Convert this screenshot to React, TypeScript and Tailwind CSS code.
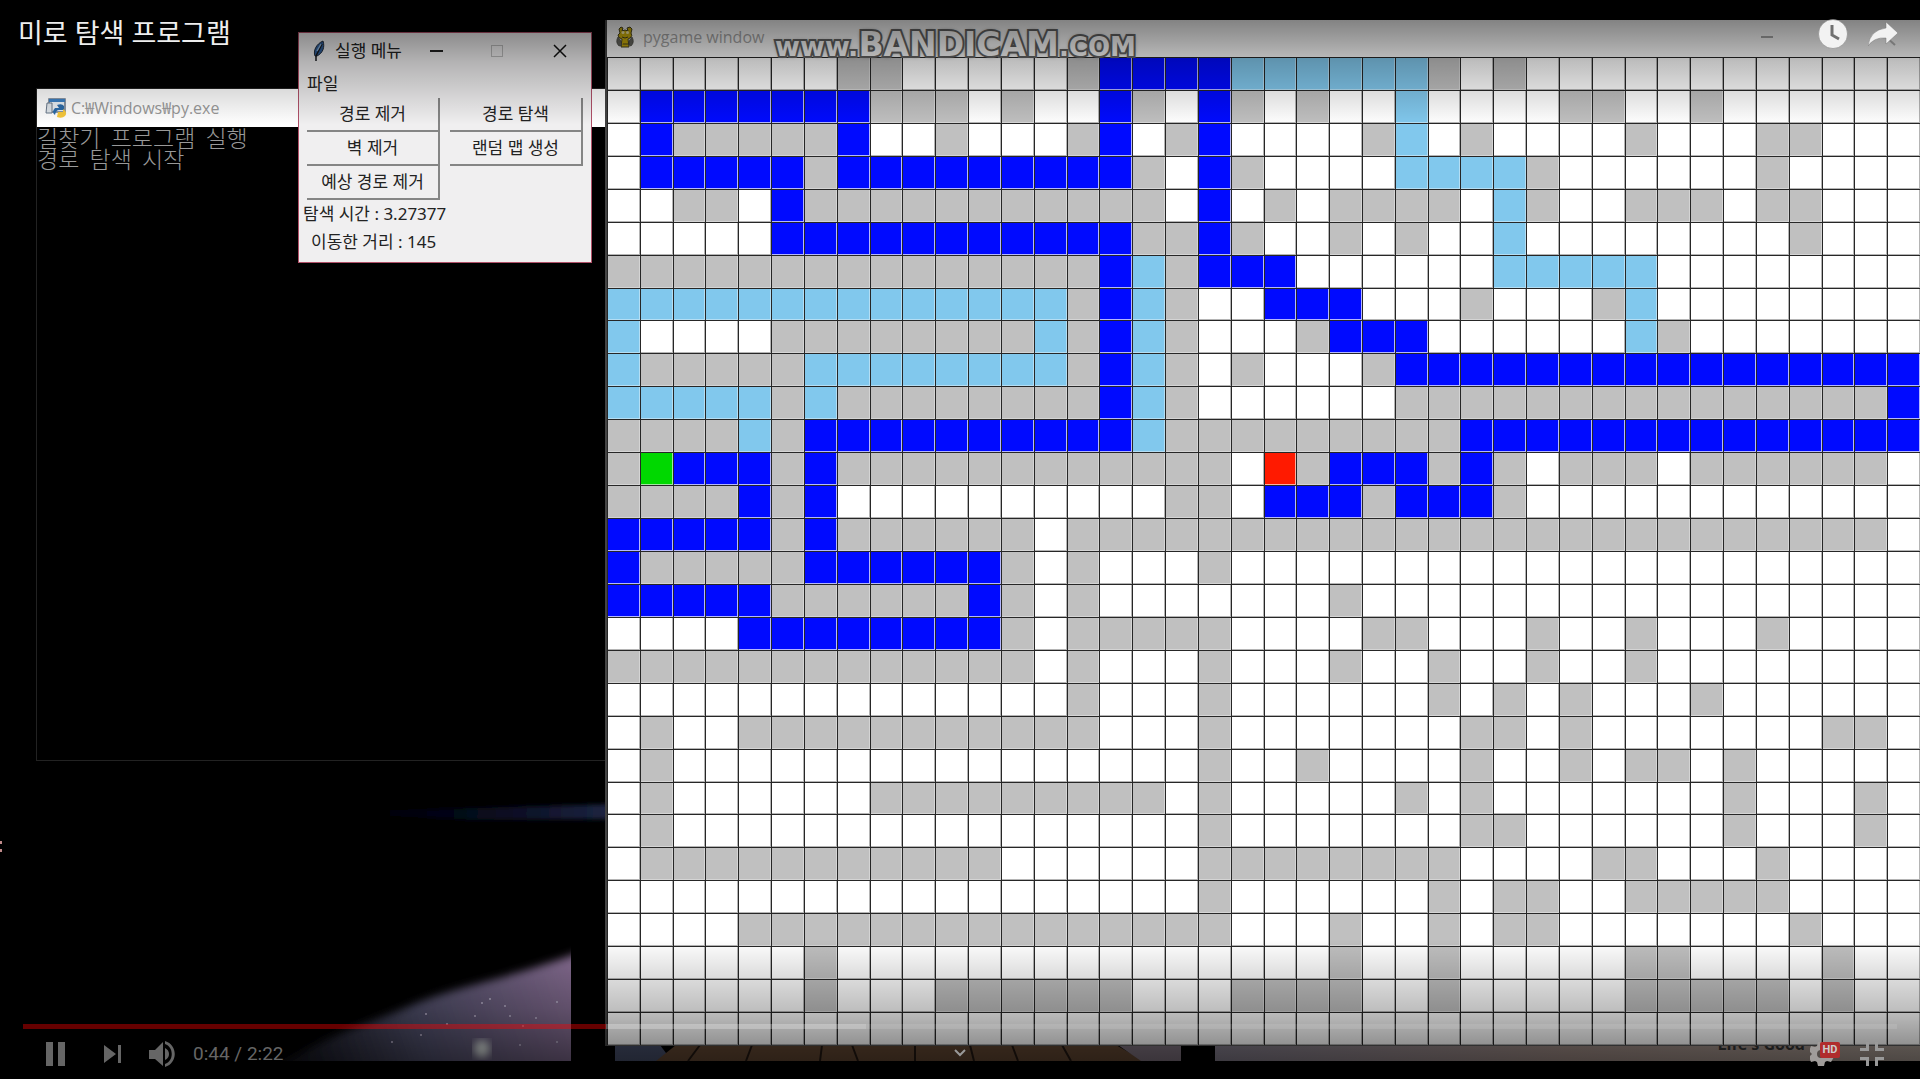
import React from "react";

const MAZE = [
  ".......##.....#bbbbssssss#.#............",
  ".bbbbbbb###.#..b#.b#.#..s....##..#......",
  ".b#####b..#...#b.#b....#s.#....#...##...",
  ".bbbbb#bbbbbbbbb#.b#....ssss#......#....",
  "..##.b###########.b.#.####.s#..###.##...",
  ".....bbbbbbbbbbb##b#..#.#..s........#...",
  "###############bs#bbb......sssss........",
  "ssssssssssssss#bs#..bbb...#...#s........",
  "s....########s#bs#...#bbb......s#.......",
  "s#####ssssssss#bs#.#...#bbbbbbbbbbbbbbbb",
  "sssss#s########bs#......###############b",
  "####s#bbbbbbbbbbs#########bbbbbbbbbbbbbb",
  "#gbbb#b############.r#bbb#b#.###.######.",
  "####b#b..........##.bbb#bbb#............",
  "bbbbb#b######.#########################.",
  "b#####bbbbbb#.#...#.....................",
  "bbbbb######b#.#.......#.................",
  "....bbbbbbbb#.#####....##...#..#...#....",
  "#############.#...#...#..#..#..#........",
  "..............#...#......#.#.#...#......",
  ".#..###########...#.......##.#.......##.",
  ".#................#..#....#..#.##.#.....",
  ".#......#########.#.....#.#.......#...#.",
  ".#................#.......##......#...#.",
  ".###########......########....##...#....",
  "..................#......#.##..#####....",
  "....###############...#..#.##.......#...",
  "......#...............#..#.....##....#..",
  "......#...######...####..#.....#####.#..",
  "........................................",
];

const CELL: Record<string, string> = {
  ".": "bg-white border-r-[#b4b4b4] border-b-[#b4b4b4]",
  "#": "bg-[#c0c0c0] border-r-[#d4d4d4] border-b-[#d4d4d4]",
  b: "bg-[#000aff] border-r-[#b4b7ff] border-b-[#b4b7ff]",
  s: "bg-[#81c8ed] border-r-[#b4def4] border-b-[#b4def4]",
  g: "bg-[#00d800] border-r-[#a0e8a0] border-b-[#a0e8a0]",
  r: "bg-[#ff1a00] border-r-[#ffb0a0] border-b-[#ffb0a0]",
};

function Maze() {
  return (
    <div className="grid flex-1 grid-cols-[repeat(40,minmax(0,1fr))] grid-rows-[repeat(30,minmax(0,1fr))] border-b border-[#555]">
      {MAZE.flatMap((row, y) =>
        row.split("").map((c, x) => (
          <div key={`${x}-${y}`} className="border-t border-l border-[#262626]">
            <div className={`h-full border-r border-b ${CELL[c]}`} />
          </div>
        )),
      )}
    </div>
  );
}

function Feather() {
  return (
    <svg viewBox="0 0 16 22" className="h-[22px] w-4" aria-hidden="true">
      <path d="M4 16C2 11 5 4 12 1c2 6 0 12-6 15z" fill="#2f5f9c" stroke="#222c3a" strokeWidth="1" />
      <path d="M11 4 5 16v5" fill="none" stroke="#15181d" strokeWidth="1.5" />
      <path d="M10 4 6 11" stroke="#8db4dd" strokeWidth="1.5" />
    </svg>
  );
}

function PyIcon() {
  return (
    <svg viewBox="0 0 22 22" className="h-[22px] w-[22px]" aria-hidden="true">
      <path d="M4 2h16v13H4z" fill="#e8eef3" stroke="#69788a" strokeWidth="1.5" />
      <path d="M4 2h16v3H4z" fill="#3d7fc0" />
      <path d="M2 6h5v10H1z" fill="#dfe5ea" stroke="#69788a" />
      <path d="M12 8q5-2 7 1v4h-5q-3 0-4 5-4-3 0-7h4z" fill="#2c6ba8" />
      <path d="M13 15h5v-3q5 3 2 7-3 3-8 1z" fill="#f6c83c" />
    </svg>
  );
}

function PygameIcon() {
  return (
    <svg viewBox="0 0 20 22" className="h-[24px] w-5" aria-hidden="true">
      <path d="M4 3 6 1l2 1-1 3q3-2 6 0l-1-3 3-1 2 2-1 4q2 3-1 5l-2 1 1 8H6l1-8q-4-1-4-4l2-2z" fill="#d3b40c" stroke="#4a4520" strokeWidth="1" />
      <path d="M3 11q-3 5 1 9l3-1-1-4zM17 11q3 5-1 9l-2-1v-4z" fill="#6a6a62" stroke="#44443c" strokeWidth=".7" />
      <circle cx="8" cy="6.5" r="1.5" fill="#fff3b0" />
      <circle cx="12.5" cy="6.5" r="1.5" fill="#fff3b0" />
      <path d="M7 11q3 2 6 0M8 18h5" fill="none" stroke="#4a4520" />
    </svg>
  );
}

function ToolButton({ children }: { children: React.ReactNode }) {
  return (
    <button className="h-[34px] border-r-2 border-b-2 border-r-[#858585] border-b-[#858585] bg-[#f0eff0] leading-5">
      {children}
    </button>
  );
}

function Wallpaper() {
  return (
    <svg className="absolute inset-0 h-full w-full" viewBox="0 0 1920 1079" preserveAspectRatio="none" aria-hidden="true">
      <defs>
        <linearGradient id="streak" gradientUnits="userSpaceOnUse" x1="390" y1="0" x2="606" y2="0">
          <stop offset="0" stopColor="#00000a" />
          <stop offset="0.5" stopColor="#080b20" />
          <stop offset="1" stopColor="#1c2440" />
        </linearGradient>
        <linearGradient id="sky" gradientUnits="userSpaceOnUse" x1="300" y1="1060" x2="590" y2="960">
          <stop offset="0" stopColor="#15161f" />
          <stop offset="0.4" stopColor="#4c4c66" />
          <stop offset="1" stopColor="#8c7096" />
        </linearGradient>
        <linearGradient id="shore" x1="0" x2="1">
          <stop offset="0" stopColor="#7c7684" />
          <stop offset="0.5" stopColor="#96847e" />
          <stop offset="1" stopColor="#a0948c" />
        </linearGradient>
        <filter id="soft"><feGaussianBlur stdDeviation="4" /></filter>
        <filter id="streakSoft" x="-5%" y="-50%" width="110%" height="200%"><feGaussianBlur stdDeviation="2" /></filter>
        <clipPath id="scene"><path d="M0 0h571v1061H0z" /></clipPath>
      </defs>
      <path d="M0 841h2v3H0zM0 849h2v3H0z" fill="#c08a8a" />
      <path d="M390 810 540 806l80-2v15l-150 1-80-4z" fill="url(#streak)" filter="url(#streakSoft)" />
      <g clipPath="url(#scene)">
        <path d="M220 1110C300 1040 360 1028 410 1006S500 983 600 945v165H220z" fill="url(#sky)" filter="url(#soft)" />
        <ellipse cx="482" cy="1049" rx="8" ry="9" fill="#d4dcd8" filter="url(#soft)" />
        <g fill="#b4acc4">
          {[[426, 1014], [482, 1003], [490, 999], [505, 1006], [510, 1016], [475, 1016], [523, 1026], [557, 1002], [421, 1035], [392, 1042], [536, 1018], [557, 1042], [447, 1024], [520, 1045]].map(([x, y]) => (
            <circle key={`${x}-${y}`} cx={x} cy={y} r="1" />
          ))}
        </g>
      </g>
      <path d="M615 1045h45l12 16h-57z" fill="#444c66" />
      <path d="M676 1045h440l28 16H656z" fill="#5e4430" />
      <path d="M700 1045l-12 16M752 1045l-6 16M822 1045l-2 16M852 1045l6 16M915 1045v16M970 1045l4 16M1012 1045l6 16M1062 1045l9 16" stroke="#201610" strokeWidth="2" />
      <path d="M1118 1045h63v16h-40z" fill="#786c78" />
      <path d="M1215 1045h705v16h-705z" fill="url(#shore)" />
    </svg>
  );
}

function PlayerBar() {
  return (
    <footer className="absolute inset-x-0 bottom-0 px-[23px] text-[#666]">
      <div className="flex h-[5px]" role="progressbar" aria-label="재생 위치" aria-valuenow={31}>
        <div className="w-[31.1%] bg-[#f00]/40" />
        <div className="w-[13.9%] bg-white/25" />
        <div className="flex-1 bg-white/10" />
      </div>
      <div className="relative flex h-[50px] items-center">
        <button aria-label="일시중지" className="ml-[23px] h-6 w-[19px]">
          <svg viewBox="0 0 19 24" fill="currentColor" aria-hidden="true"><path d="M0 0h7v24H0zM12 0h7v24h-7z" /></svg>
        </button>
        <button aria-label="다음" className="ml-[39px] h-[18px] w-[17px]">
          <svg viewBox="0 0 17 18" fill="currentColor" aria-hidden="true"><path d="M0 0 12 9 0 18zM14 0h3v18h-3z" /></svg>
        </button>
        <button aria-label="음소거" className="ml-[28px] h-[26px] w-[26px]">
          <svg viewBox="0 0 26 26" fill="currentColor" aria-hidden="true">
            <path d="M0 9v9h6l8 7V1L6 9zM16 7v12q4-2 4-6t-4-6zM16 0v3c9 3 9 17 0 20v3c13-4 13-22 0-26z" />
          </svg>
        </button>
        <span className="ml-[18px] font-[Roboto,sans-serif] text-[19px] leading-6">0:44 / 2:22</span>
        <button aria-label="더보기" className="absolute top-5 left-1/2 h-2 w-3 -translate-x-1/2 text-[#999]">
          <svg viewBox="0 0 12 8" fill="none" stroke="currentColor" strokeWidth="2" className="block" aria-hidden="true"><path d="m1 1 5 5 5-5" /></svg>
        </button>
        <button aria-label="설정" className="relative ml-auto h-6 w-[30px] text-[#a09c9a]">
          <svg viewBox="0 0 24 24" className="block h-6 w-6" fill="currentColor" aria-hidden="true">
            <path fillRule="evenodd" d="m8 0h6l1 4 2 1 4-1 3 5-3 3 3 3-3 5-4-1-2 1-1 4H8l-1-4-2-1-4 1-2-5 3-3-3-3 2-5 4 1 2-1zM11 8a4 4 0 1 0 0 8 4 4 0 0 0 0-8z" />
          </svg>
          <span className="absolute top-0 right-0 flex h-4 w-5 items-center justify-center rounded-xs bg-[#b02c2c] font-[Roboto,sans-serif] text-[11px] leading-4 font-bold text-[#ccc]">HD</span>
        </button>
        <button aria-label="전체화면 종료" className="mr-[13px] ml-5 h-6 w-6 text-[#999]">
          <svg viewBox="0 0 24 24" fill="none" stroke="currentColor" strokeWidth="3" aria-hidden="true">
            <path d="M0 7.5h7.500V0M16.500 0v7.500H24M0 16.500h7.500V24M24 16.500h-7.500V24" />
          </svg>
        </button>
      </div>
    </footer>
  );
}

export default function App() {
  return (
    <main className="relative h-screen w-full overflow-hidden bg-black font-['Noto_Sans','Noto_Sans_CJK_KR',sans-serif]">
      <Wallpaper />
      <span className="absolute right-[115px] bottom-[25px] font-['Open_Sans',sans-serif] text-base leading-5 font-bold text-[#333]">Life's Good</span>

      <section className="absolute top-[88px] left-9 flex h-[673px] w-[571px] flex-col border border-[#222]">
        <header className="flex h-[38px] items-center gap-1 bg-white pl-2 text-base text-[#999]">
          <PyIcon />
          <span className="font-['Open_Sans','Noto_Sans_CJK_KR',sans-serif]">C:₩Windows₩py.exe</span>
        </header>
        <pre className="font-['Noto_Sans_CJK_KR',monospace] text-[23px] leading-[21px] font-light text-[#999]">{"길찾기  프로그램  실행\n경로  탐색  시작"}</pre>
      </section>

      <section className="absolute top-5 right-0 bottom-[33px] left-[605px] flex flex-col border-l-2 border-[#444]">
        <header className="flex h-[37px] items-center bg-white pb-1 pl-2 text-base text-[#aaa]">
          <PygameIcon />
          <span className="ml-2 font-['Open_Sans',sans-serif]">pygame window</span>
          <span className="mr-[147px] ml-auto h-0.5 w-3 bg-[#aaa]" />
        </header>
        <Maze />
      </section>

      <p className="absolute top-[25px] left-[775px] flex items-baseline font-['DejaVu_Sans',sans-serif] leading-10 font-bold text-white [-webkit-text-stroke:4px_#6a6a6a] [paint-order:stroke_fill] [text-shadow:0_0_4px_#555]">
        <span className="text-[27px]">www.</span>
        <span className="text-[33px]">BANDICAM</span>
        <span className="text-[26px]">.COM</span>
      </p>

      <section className="absolute top-8 left-[298px] flex h-[231px] w-[294px] flex-col border border-[#b05068] bg-[#f0eff0] text-[17px] text-[#222]">
        <header className="flex h-9 items-center pl-3">
          <Feather />
          <span className="ml-2">실행 메뉴</span>
          <button aria-label="최소화" className="ml-7 h-4 w-[13px]"><span className="block h-0.5 bg-[#222]" /></button>
          <button aria-label="최대화" className="ml-12 size-3 border border-[#bbb]" />
          <button aria-label="닫기" className="ml-[50px] size-[14px]">
            <svg viewBox="0 0 14 14" aria-hidden="true"><path d="m1 1 12 12M13 1 1 13" stroke="#111" strokeWidth="1.5" /></svg>
          </button>
        </header>
        <nav className="h-[29px] pt-px pl-2"><button className="leading-7">파일</button></nav>
        <div className="grid grid-cols-[133px_133px] gap-x-[10px] pl-2">
          <ToolButton>경로 제거</ToolButton>
          <ToolButton>경로 탐색</ToolButton>
          <ToolButton>벽 제거</ToolButton>
          <ToolButton>랜덤 맵 생성</ToolButton>
          <ToolButton>예상 경로 제거</ToolButton>
        </div>
        <p className="pl-1 leading-7">탐색 시간 : 3.27377</p>
        <p className="pl-3 leading-7">이동한 거리 : 145</p>
      </section>

      <div className="pointer-events-none absolute inset-x-0 top-0 h-[125px] bg-linear-to-b from-black/60 via-black/25 to-transparent" />
      <div className="pointer-events-none absolute inset-x-0 bottom-0 h-[140px] bg-linear-to-t from-black/60 via-black/25 to-transparent" />

      <h1 className="absolute top-[17px] left-[18px] text-[27px] leading-8 text-[#eee]">미로 탐색 프로그램</h1>
      <div className="absolute top-[19px] right-[22px] flex items-center gap-5 text-[#f2f2f2]">
        <button aria-label="나중에 볼 동영상" className="size-[30px]">
          <svg viewBox="0 0 30 30" aria-hidden="true">
            <circle cx="15" cy="15" r="14.5" fill="currentColor" stroke="#777" strokeWidth=".5" />
            <path d="M14 6v10l7 4" fill="none" stroke="#707070" strokeWidth="3" />
          </svg>
        </button>
        <button aria-label="공유" className="h-6 w-[30px]">
          <svg viewBox="0 0 30 24" fill="currentColor" aria-hidden="true">
            <path d="m17 14 10 9" stroke="#777" strokeWidth="2" />
            <path d="M18 0 30 11 18 22v-6Q6 15 0 24 2 8 18 6z" stroke="#777" strokeWidth=".5" />
          </svg>
        </button>
      </div>
      <PlayerBar />
    </main>
  );
}
